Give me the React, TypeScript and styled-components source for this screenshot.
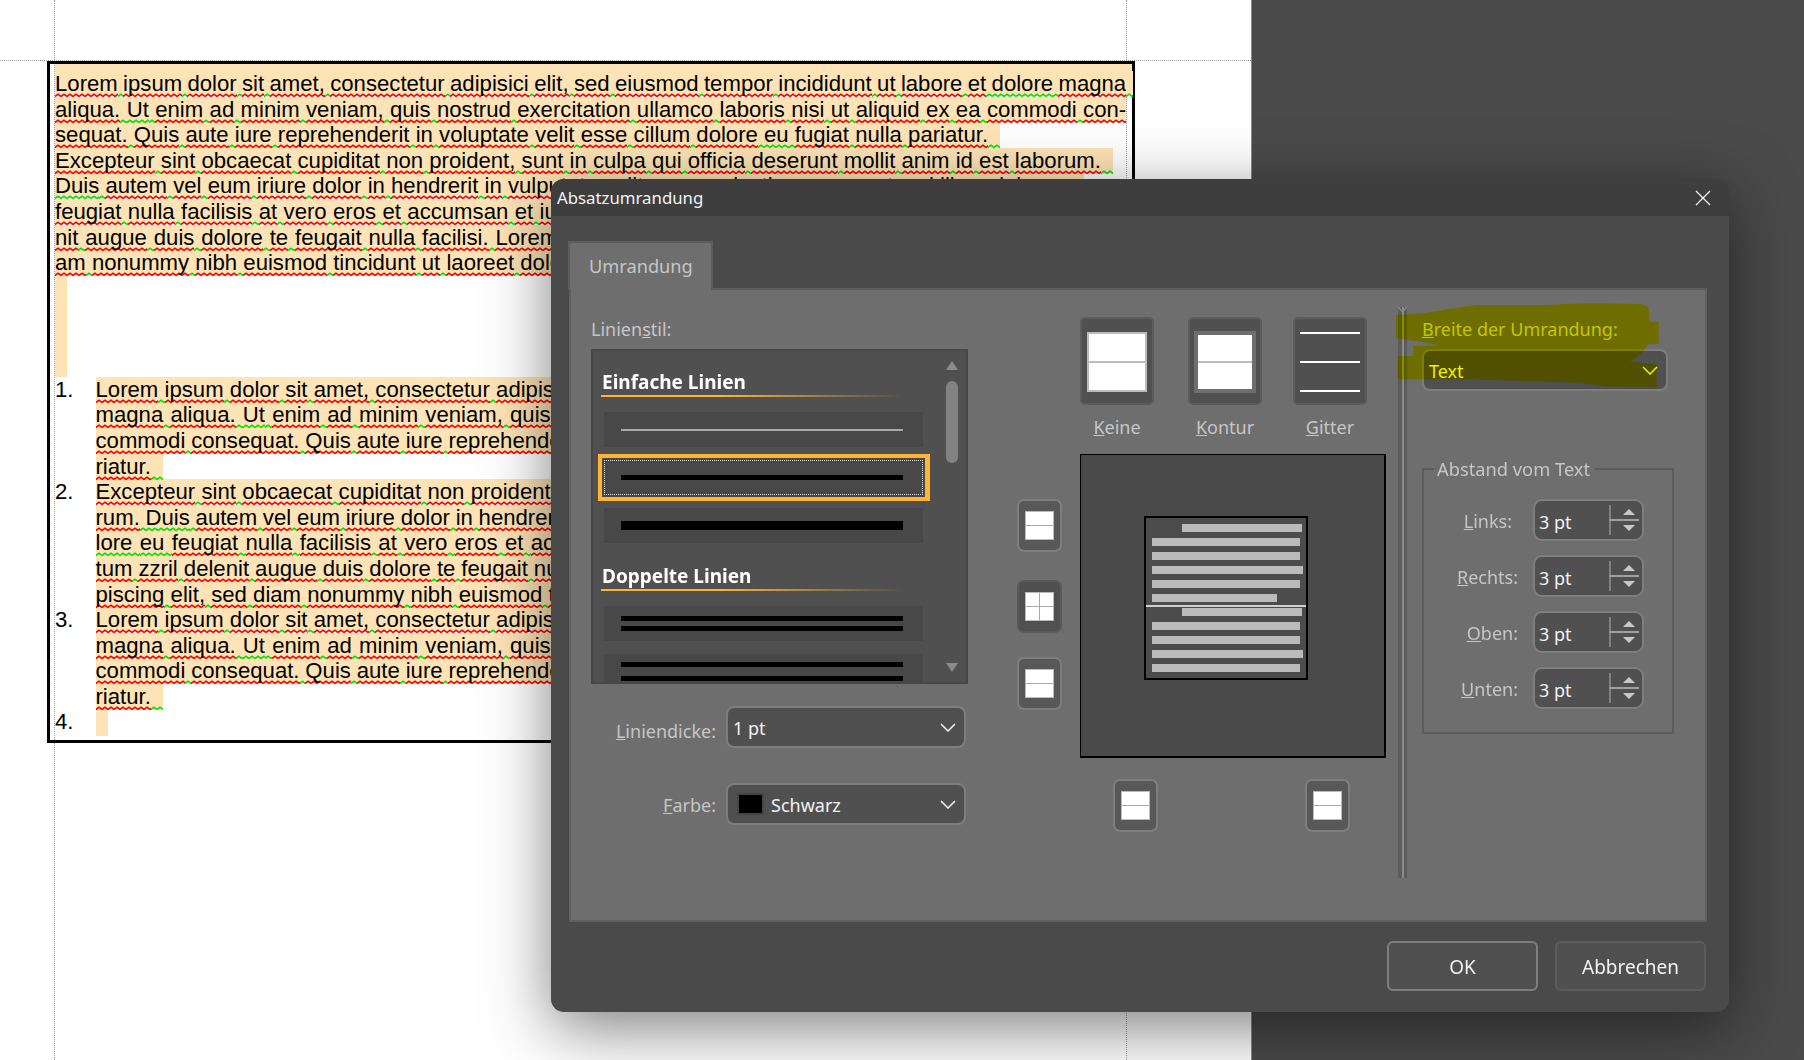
import React, { useLayoutEffect, useRef } from "react"
import styled, { createGlobalStyle } from "styled-components"

const GlobalStyle = createGlobalStyle`
  html, body {
    margin: 0;
    padding: 0;
    height: 1060px;
    overflow: hidden;
    background: #fff;
  }
  * { box-sizing: border-box; }
`

const wave = (c: string) =>
  `url("data:image/svg+xml,%3Csvg xmlns='http://www.w3.org/2000/svg' width='6' height='5'%3E%3Cpath d='M0 3.6L3 1.2L6 3.6' fill='none' stroke='%23${c}' stroke-width='1.6'/%3E%3C/svg%3E")`
const RED = wave("f00000")
const GRN = wave("00e000")

const Screen = styled.div`
  position: relative;
  display: flex;
  width: 1804px;
  height: 1060px;
  overflow: hidden;
  background: #4a4a4a;
`
const Sheet = styled.div`
  position: relative;
  width: 1252px;
  height: 1060px;
  padding: 61px 0 0 47px;
  border-right: 1px solid #8a8a8a;
  background: #fff;
`
const GuideV = styled.div<{ $x: number }>`
  position: absolute;
  top: 0;
  bottom: 0;
  left: ${p => p.$x}px;
  border-left: 1px dotted #999;
`
const GuideH = styled.div`
  position: absolute;
  top: 60px;
  left: 0;
  right: 0;
  border-top: 1px dotted #999;
`
const Frame = styled.div`
  position: relative;
  width: 1088px;
  height: 682px;
  padding: 0 0 0 5px;
  border: 3px solid #000;
  font: 22.15px/25.6px "Liberation Sans", Arial, sans-serif;
  color: #000;
`
const Para = styled.div`
  padding-top: 7px;
  background: linear-gradient(#fde3b5, #fde3b5) top left / 1077px 7px no-repeat;
`
const Line = styled.div<{ $w: number; $z: number }>`
  position: relative;
  z-index: ${p => p.$z};
  width: ${p => p.$w}px;
  height: 25.6px;
  white-space: pre;
`
const Mark = styled.span`
  background: #fde3b5;
`
const Word = styled.span<{ $ok?: boolean }>`
  padding-bottom: 2px;
  background: ${p => (p.$ok ? GRN : RED)} repeat-x left bottom / 6px 5px;
`
const LineTail = styled.span`
  position: absolute;
  left: 100%;
  top: 0;
  width: 7px;
  height: 27px;
  background: ${GRN} repeat-x left bottom / 6px 5px, linear-gradient(#fde3b5, #fde3b5) no-repeat top left / 100% 24px;
`
const EmptyPara = styled.div`
  width: 12px;
  height: 101px;
  background: #fde3b5;
`
const Item = styled.div`
  display: flex;
`
const Num = styled.div`
  width: 40.5px;
  flex: none;
`
const ItemTail = styled.div`
  width: 12px;
  height: 27px;
  background: #fde3b5;
`

const GREEN = new Set(["Ut", "Duis", "lore", "eu"])

const Row: React.FC<{ text: string; w: number; z: number; fit?: boolean; tail?: boolean; end?: boolean }> = ({
  text,
  w,
  z,
  fit,
  tail,
  end,
}) => {
  const parts = text.split(/( )/)
  const ref = useRef<HTMLSpanElement>(null)

  // the word processor stretches or squeezes the gaps to fill the line
  useLayoutEffect(() => {
    const el = ref.current
    if (!el || !fit) return
    el.style.wordSpacing = "0px"
    const free = w - el.getBoundingClientRect().width
    el.style.wordSpacing = `${free / ((parts.length - 1) / 2)}px`
  }, [text, w, fit])

  return (
    <Line $w={w} $z={z}>
      <Mark ref={ref}>
        {parts.map((t, i) => (
          <Word key={i} $ok={t === " " || t.startsWith("~") || GREEN.has(t)}>
            {t.replace("~", "")}
          </Word>
        ))}
        {end ? <Word $ok>{"  "}</Word> : null}
      </Mark>
      {tail ? <LineTail /> : null}
    </Line>
  )
}

const PARA = [
  "Lorem ipsum dolor sit amet, consectetur adipisici elit, sed eiusmod tempor incididunt ut labore et ~dolore magna",
  "aliqua. Ut enim ad minim veniam, quis nostrud exercitation ullamco laboris nisi ut aliquid ex ea commodi con-",
  "sequat. Quis aute iure reprehenderit in voluptate velit esse cillum dolore eu fugiat nulla pariatur.",
  "Excepteur sint obcaecat cupiditat non proident, sunt in culpa qui officia deserunt mollit anim id est laborum.",
  "Duis autem vel eum iriure dolor in hendrerit in vulputate velit esse molestie consequat, vel illum dolore eu",
  "feugiat nulla facilisis at vero eros et accumsan et iusto odio dignissim qui blandit praesent luptatum zzril dele-",
  "nit augue duis dolore te feugait nulla facilisi. Lorem ipsum dolor sit amet, consectetuer adipiscing elit, sed di-",
  "am nonummy nibh euismod tincidunt ut laoreet dolore magna aliquam erat volutpat.",
]
const ITEM_A = [
  "Lorem ipsum dolor sit amet, consectetur adipisici elit, sed eiusmod tempor incididunt ut labore et dolore",
  "magna aliqua. Ut enim ad minim veniam, quis nostrud exercitation ullamco laboris nisi ut aliquid ex ea",
  "commodi consequat. Quis aute iure reprehenderit in voluptate velit esse cillum dolore eu fugiat nulla pa-",
  "riatur.",
]
const ITEM_B = [
  "Excepteur sint obcaecat cupiditat non proident, sunt in culpa qui officia deserunt mollit anim id est labo-",
  "rum. Duis autem vel eum iriure dolor in hendrerit in vulputate velit esse molestie consequat, vel illum do-",
  "lore eu feugiat nulla facilisis at vero eros et accumsan et iusto odio dignissim qui blandit praesent lup-",
  "tum zzril delenit augue duis dolore te feugait nulla facilisi. Lorem ipsum dolor sit amet, consectetuer adi-",
  "piscing elit, sed diam nonummy nibh euismod tincidunt ut laoreet dolore magna aliquam erat volutpat.",
]

/* dialog */
const Dialog = styled.div`
  position: absolute;
  z-index: 200;
  left: 551px;
  top: 179px;
  width: 1178px;
  height: 833px;
  display: flex;
  flex-direction: column;
  border-radius: 13px;
  background: #4a4a4a;
  box-shadow: 0 16px 64px rgba(0, 0, 0, 0.5);
  font: 18px/24px "Noto Sans", sans-serif;
  color: #c6c6c6;
`
const TitleBar = styled.div`
  flex: none;
  height: 37px;
  padding-left: 6px;
  display: flex;
  align-items: center;
  justify-content: space-between;
  border-radius: 13px 13px 0 0;
  background: #3e3e3e;
  color: #f2f2f2;
  font-size: 16.8px;
`
const CloseIcon = styled.svg`
  width: 16px;
  height: 16px;
  margin-right: 18px;
`
const DialogBody = styled.div`
  flex: 1;
  padding: 25px 22px 0 18px;
`
const Tab = styled.div`
  width: 145px;
  height: 49px;
  margin-left: -1px;
  margin-bottom: -2px;
  padding: 11px 0 0 19px;
  position: relative;
  z-index: 1;
  font-size: 18.2px;
  border: 2px solid #5c5c5c;
  border-bottom: none;
  background: #6e6e6e;
`
const Panel = styled.div`
  display: flex;
  height: 634px;
  padding: 0 0 0 20px;
  border: 2px solid #5f5f5f;
  background: #6e6e6e;
`
const LeftCol = styled.div`
  flex: none;
  width: 377px;
  padding-top: 27px;
`
const FieldLabel = styled.div`
  height: 32px;
  white-space: nowrap;
`
const ListBox = styled.div`
  position: relative;
  height: 335px;
  padding: 0 0 0 8px;
  overflow: hidden;
  border: 2px solid #474747;
  background: #505050;
`
const GroupTitle = styled.div<{ $top: number }>`
  width: 301px;
  height: 27px;
  margin-top: ${p => p.$top}px;
  padding: 0 0 1px 1px;
  font-size: 19px;
  font-weight: 700;
  color: #fff;
  border-bottom: 2px solid;
  border-image: linear-gradient(90deg, #ffb433 40%, rgba(255, 180, 51, 0)) 1;
`
const StyleRow = styled.div<{ $top: number; $gap?: number; $selected?: boolean }>`
  display: flex;
  flex-direction: column;
  justify-content: center;
  gap: ${p => p.$gap ?? 5}px;
  flex: none;
  width: 319px;
  height: 35px;
  margin: ${p => p.$top}px 0 0 3px;
  padding: 0 20px 0 17px;
  background: #484848;
  ${p =>
    p.$selected &&
    `outline: 1px dotted #e6e6e6; outline-offset: -1px; box-shadow: 0 0 0 2px #484848, 0 0 0 6px #ffb433, 1px 0 0 6px #ffb433;`}
`
const StyleLine = styled.div<{ $h: number; $c?: string }>`
  flex: none;
  height: ${p => p.$h}px;
  background: ${p => p.$c || "#000"};
`
const ScrollUp = styled.div`
  position: absolute;
  right: 8px;
  top: 10px;
  border: 6px solid transparent;
  border-top: none;
  border-bottom: 9px solid #8a8a8a;
`
const ScrollDown = styled(ScrollUp)`
  top: auto;
  bottom: 10px;
  border-bottom: none;
  border-top: 9px solid #8a8a8a;
`
const ScrollThumb = styled.div`
  position: absolute;
  right: 8px;
  top: 30px;
  width: 12px;
  height: 82px;
  border-radius: 6px;
  background: #828282;
`
const FormRow = styled.div<{ $top: number }>`
  display: flex;
  align-items: center;
  justify-content: flex-end;
  gap: 10px;
  margin: ${p => p.$top}px 2px 0 0;
`
const FormLabel = styled.span<{ $drop: number }>`
  padding-top: ${p => p.$drop}px;
`
const Select = styled.div<{ $w: number }>`
  display: flex;
  align-items: center;
  width: ${p => p.$w}px;
  height: 42px;
  padding: 0 8px 0 5px;
  border: 2px solid #7e7e7e;
  border-radius: 8px;
  background: #505050;
  color: #f2f2f2;
`
const SelectText = styled.span`
  flex: 1;
  padding-top: 2px;
`
const Swatch = styled.span`
  width: 27px;
  height: 22px;
  margin: 0 7px 0 4px;
  border: 2px solid #444;
  background: #000;
`
const Chevron = styled.svg`
  width: 16px;
  height: 9px;
`
const SideCol = styled.div`
  flex: none;
  width: 45px;
  margin-left: 49px;
  padding-top: 209px;
`
const SideBtn = styled.div<{ $on?: boolean; $top?: number }>`
  display: flex;
  align-items: center;
  justify-content: center;
  width: 45px;
  height: 53px;
  margin-top: ${p => p.$top || 0}px;
  border: 2px solid ${p => (p.$on ? "#5a5a5a" : "#7e7e7e")};
  border-radius: 7px;
  background: ${p => (p.$on ? "#505050" : "#585858")};
`
const CellIcon = styled.div<{ $cross?: boolean }>`
  width: 29px;
  height: 29px;
  border: 1px solid #bbb;
  background:
    ${p => (p.$cross ? "linear-gradient(#aaa, #aaa) center / 1px 100% no-repeat," : "")}
    linear-gradient(#aaa, #aaa) center / 100% 1px no-repeat,
    #fff;
`
const CenterCol = styled.div`
  flex: none;
  width: 306px;
  margin-left: 18px;
  padding-top: 27px;
`
const Presets = styled.div`
  display: grid;
  grid-template-columns: 108px 105px 74px;
`
const Preset = styled.div`
  width: 74px;
  text-align: center;
`
const PresetBtn = styled.div`
  display: flex;
  align-items: center;
  justify-content: center;
  height: 88px;
  margin-bottom: 10px;
  padding-top: 2px;
  border: 2px solid #5c5c5c;
  border-radius: 5px;
  background: #505050;
`
const NoneIcon = styled.div`
  width: 60px;
  height: 60px;
  border: 2px solid #bbb;
  background: linear-gradient(#bbb, #bbb) center / 100% 2px no-repeat, #fff;
`
const BoxIcon = styled.div`
  width: 62px;
  height: 62px;
  border: 4px solid #6e6e6e;
  background: linear-gradient(#bbb, #bbb) center / 100% 2px no-repeat, #fff;
`
const GridIcon = styled.div`
  display: flex;
  flex-direction: column;
  justify-content: space-between;
  width: 60px;
  height: 60px;
`
const GridLine = styled.div`
  height: 2px;
  background: #fff;
`
const Preview = styled.div`
  height: 304px;
  margin-top: 15px;
  padding: 61px 0 0 63px;
  border: solid #000;
  border-width: 1px 2px 2px 1px;
  background: #4a4a4a;
`
const Doc = styled.div`
  display: flex;
  flex-direction: column;
  width: 164px;
  height: 164px;
  padding-top: 6px;
  border: 2px solid #000;
  background: #4c4c4c;
`
const Bar = styled.div<{ $x: number; $w: number; $gap: number }>`
  flex: none;
  height: 8px;
  width: ${p => p.$w}px;
  margin: ${p => p.$gap}px 0 0 ${p => p.$x}px;
  background: #bbb;
`
const DocRule = styled.div`
  flex: none;
  height: 2px;
  margin-top: 3px;
  background: #cfcfcf;
`
const BottomBtns = styled.div`
  display: flex;
  gap: 147px;
  margin-top: 21px;
  padding-left: 33px;
`
const Splitter = styled.div`
  flex: none;
  position: relative;
  width: 9px;
  height: 571px;
  margin: 17px 0 0 12px;
  background: linear-gradient(90deg, #5c5c5c 0 4px, #8a8a8a 4px 6px, #5c5c5c 6px 9px);
`
const SplitterHead = styled.svg`
  position: absolute;
  left: 0;
  top: 0;
  width: 9px;
  height: 6px;
`
const RightCol = styled.div`
  flex: none;
  width: 252px;
  margin-left: 15px;
  padding-top: 27px;
`
const Spacing = styled.fieldset`
  width: 252px;
  height: 275px;
  margin: 68px 0 0;
  padding: 20px 0 0;
  border: 2px solid #5c5c5c;
`
const SpacingTitle = styled.legend`
  margin-left: 10px;
  padding: 0 5px 0 3px;
  font-size: 18.3px;
  line-height: 20px;
`
const SpinRow = styled.div`
  display: flex;
  justify-content: flex-end;
  align-items: center;
  height: 42px;
  margin: 0 28px 14px 0;
`
const SpinLabel = styled.div<{ $pad?: number }>`
  padding-top: 1px;
  margin-right: ${p => 15 + (p.$pad || 0)}px;
`
const Spin = styled.div`
  position: relative;
  display: flex;
  align-items: center;
  width: 111px;
  height: 42px;
  padding: 3px 0 0 4px;
  border: 2px solid #7e7e7e;
  border-radius: 9px;
  background: #505050;
  color: #f2f2f2;
`
const SpinDivider = styled.div`
  position: absolute;
  left: 74px;
  top: 4px;
  width: 2px;
  height: 30px;
  background: #808080;
`
const SpinCross = styled.div`
  position: absolute;
  left: 74px;
  top: 18px;
  width: 30px;
  height: 2px;
  background: #a0a0a0;
`
const SpinUp = styled.div`
  position: absolute;
  left: 88px;
  top: 8px;
  border: 6px solid transparent;
  border-top: none;
  border-bottom: 6px solid #c8c8c8;
`
const SpinDown = styled.div`
  position: absolute;
  left: 88px;
  top: 24px;
  border: 6px solid transparent;
  border-bottom: none;
  border-top: 6px solid #c8c8c8;
`
const Marker = styled.svg`
  position: absolute;
  left: 829px;
  top: -9px;
  width: 424px;
  height: 300px;
  pointer-events: none;
  mix-blend-mode: multiply;
`
const Footer = styled.div`
  flex: none;
  display: flex;
  justify-content: flex-end;
  gap: 17px;
  padding: 19px 23px 21px 0;
`
const Button = styled.div<{ $primary?: boolean }>`
  display: flex;
  align-items: center;
  justify-content: center;
  width: 151px;
  height: 50px;
  padding-top: 2px;
  border: 2px solid ${p => (p.$primary ? "#7e7e7e" : "#5c5c5c")};
  border-radius: 6px;
  background: #505050;
  color: #f2f2f2;
  font-size: 19px;
`

const Down: React.FC = () => (
  <Chevron viewBox="0 0 16 9" fill="none" stroke="currentColor" strokeWidth="1.5">
    <path d="M1 1l7 7 7-7" />
  </Chevron>
)

const BARS: [number, number][] = [
  [36, 120], [6, 148], [6, 148], [6, 151], [6, 148], [6, 125],
]
const BARS_B: [number, number][] = [
  [36, 120], [6, 148], [6, 148], [6, 151], [6, 148],
]

const SPIN = [
  { key: "L", rest: "inks:", pad: 6 },
  { key: "R", rest: "echts:" },
  { key: "O", rest: "ben:" },
  { key: "U", rest: "nten:" },
]

export default function App() {
  return (
    <Screen>
      <GlobalStyle />
      <Sheet>
        <GuideV $x={54} />
        <GuideV $x={1126} />
        <GuideH />
        <Frame>
          <Para>
            {PARA.map((t, i) => (
              <Row
                key={i}
                text={t}
                w={1071}
                z={100 - i}
                fit={i === 0 || i === 1 || i === 5 || i === 6}
                tail={i === 0}
                end={i === 2 || i === 3 || i === 7}
              />
            ))}
            <EmptyPara />
          </Para>
          {[ITEM_A, ITEM_B, ITEM_A].map((lines, n) => (
            <Item key={n}>
              <Num>{n + 1}.</Num>
              <div>
                {lines.map((t, i) => (
                  <Row
                    key={i}
                    text={t}
                    w={1012}
                    z={60 - n * 10 - i}
                    fit={i < lines.length - 1}
                    end={i === lines.length - 1}
                  />
                ))}
              </div>
            </Item>
          ))}
          <Item>
            <Num>4.</Num>
            <ItemTail />
          </Item>
        </Frame>
      </Sheet>

      <Dialog>
        <TitleBar>
          Absatzumrandung
          <CloseIcon viewBox="0 0 16 16" fill="none" stroke="#f2f2f2" strokeWidth="1.3">
            <path d="M1 1l14 14M15 1L1 15" />
          </CloseIcon>
        </TitleBar>
        <DialogBody>
          <Tab>Umrandung</Tab>
          <Panel>
            <LeftCol>
              <FieldLabel>Linien<u>s</u>til:</FieldLabel>
              <ListBox>
                <GroupTitle $top={19}>Einfache Linien</GroupTitle>
                <StyleRow $top={15}><StyleLine $h={2} $c="#aaa" /></StyleRow>
                <StyleRow $top={13} $selected><StyleLine $h={5} /></StyleRow>
                <StyleRow $top={13}><StyleLine $h={9} /></StyleRow>
                <GroupTitle $top={21}>Doppelte Linien</GroupTitle>
                <StyleRow $top={15}><StyleLine $h={5} /><StyleLine $h={5} /></StyleRow>
                <StyleRow $top={13} $gap={9}><StyleLine $h={5} /><StyleLine $h={5} /></StyleRow>
                <ScrollUp />
                <ScrollThumb />
                <ScrollDown />
              </ListBox>
              <FormRow $top={22}>
                <FormLabel $drop={8}><u>L</u>iniendicke:</FormLabel>
                <Select $w={240}><SelectText>1 pt</SelectText><Down /></Select>
              </FormRow>
              <FormRow $top={35}>
                <FormLabel $drop={1}><u>F</u>arbe:</FormLabel>
                <Select $w={240}><Swatch /><SelectText>Schwarz</SelectText><Down /></Select>
              </FormRow>
            </LeftCol>
            <SideCol>
              <SideBtn><CellIcon /></SideBtn>
              <SideBtn $on $top={28}><CellIcon $cross /></SideBtn>
              <SideBtn $top={24}><CellIcon /></SideBtn>
            </SideCol>
            <CenterCol>
              <Presets>
                <Preset>
                  <PresetBtn><NoneIcon /></PresetBtn>
                  <u>K</u>eine
                </Preset>
                <Preset>
                  <PresetBtn><BoxIcon /></PresetBtn>
                  <u>K</u>ontur
                </Preset>
                <Preset>
                  <PresetBtn>
                    <GridIcon><GridLine /><GridLine /><GridLine /></GridIcon>
                  </PresetBtn>
                  <u>G</u>itter
                </Preset>
              </Presets>
              <Preview>
                <Doc>
                  {BARS.map(([x, w], i) => <Bar key={i} $x={x} $w={w} $gap={i === 0 ? 0 : 6} />)}
                  <DocRule />
                  {BARS_B.map(([x, w], i) => <Bar key={i} $x={x} $w={w} $gap={i === 0 ? 1 : 6} />)}
                </Doc>
              </Preview>
              <BottomBtns>
                <SideBtn><CellIcon /></SideBtn>
                <SideBtn><CellIcon /></SideBtn>
              </BottomBtns>
            </CenterCol>
            <Splitter>
              <SplitterHead viewBox="0 0 9 6" fill="none" stroke="#8a8a8a" strokeWidth="1.5">
                <path d="M0 0l4.5 4.5L9 0" />
              </SplitterHead>
            </Splitter>
            <RightCol>
              <FieldLabel><u>B</u>reite der Umrandung:</FieldLabel>
              <Select $w={246}><SelectText>Text</SelectText><Down /></Select>
              <Spacing>
                <SpacingTitle>Abstand vom Text</SpacingTitle>
                {SPIN.map(s => (
                  <SpinRow key={s.key}>
                    <SpinLabel $pad={s.pad}><u>{s.key}</u>{s.rest}</SpinLabel>
                    <Spin>
                      3 pt
                      <SpinDivider />
                      <SpinCross />
                      <SpinUp />
                      <SpinDown />
                    </Spin>
                  </SpinRow>
                ))}
              </Spacing>
            </RightCol>
          </Panel>
        </DialogBody>
        <Footer>
          <Button $primary>OK</Button>
          <Button>Abbrechen</Button>
        </Footer>
        <Marker viewBox="0 0 1272 900">
          <path
            fill="#ffff00"
            d="M48 435 L130 430 Q210 415 290 405 L500 405 Q570 400 640 400 L780 402 Q805 405 807 420 L808 455 L836 455 L836 522 L805 522 Q785 555 750 575 L830 582 L830 652 L680 650 L600 638 L420 632 L250 628 L52 628 L52 558 L100 558 L100 527 L180 527 Q130 515 48 505 Z"
          />
        </Marker>
      </Dialog>
    </Screen>
  )
}
